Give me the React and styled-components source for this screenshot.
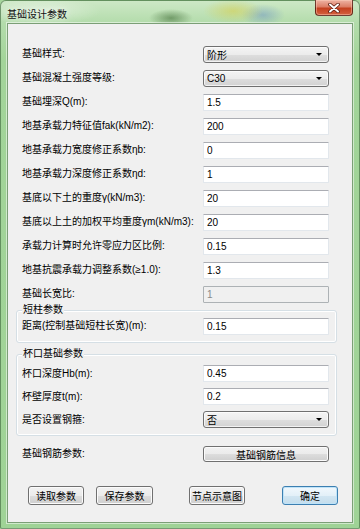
import React from 'react';
import styled, { createGlobalStyle } from 'styled-components';

const GlobalStyle = createGlobalStyle`
    html, body {
        margin: 0;
        padding: 0;
        overflow: hidden;
        background: #a6d69d;
    }
`;

const FONT = `"Liberation Sans", "Noto Sans CJK SC", sans-serif`;

const rows = [
    { label: '基础样式:', kind: 'select', value: '阶形' },
    { label: '基础混凝土强度等级:', kind: 'select', value: 'C30' },
    { label: '基础埋深Q(m):', value: '1.5' },
    { label: '地基承载力特征值fak(kN/m2):', value: '200' },
    { label: '地基承载力宽度修正系数ηb:', value: '0' },
    { label: '地基承载力深度修正系数ηd:', value: '1' },
    { label: '基底以下土的重度γ(kN/m3):', value: '20' },
    { label: '基底以上土的加权平均重度γm(kN/m3):', value: '20' },
    { label: '承载力计算时允许零应力区比例:', value: '0.15' },
    { label: '地基抗震承载力调整系数(≥1.0):', value: '1.3' },
    { label: '基础长宽比:', value: '1', disabled: true },
];

const cupRows = [
    { label: '杯口深度Hb(m):', value: '0.45' },
    { label: '杯壁厚度t(m):', value: '0.2' },
    { label: '是否设置钢箍:', kind: 'select', value: '否' },
];

const Control = ({ kind, value, disabled }) =>
    kind === 'select' ? (
        <Select>
            <span>{value}</span>
            <Arrow />
        </Select>
    ) : (
        <TextBox value={value} readOnly disabled={disabled} />
    );

const Field = ({ row, inset, h }) => (
    <Row $inset={inset} $h={h}>
        <Label>{row.label}</Label>
        <Control {...row} />
    </Row>
);

const App = () => (
    <>
        <GlobalStyle />
        <Window>
            <TitleBar>
                <Title>基础设计参数</Title>
                <CloseButton>
                    <svg width="12" height="10" viewBox="0 0 12 10">
                        <path d="M2 1.5 L10 8.5 M10 1.5 L2 8.5" stroke="#5a1c10" strokeWidth="3.6" strokeLinecap="round" />
                        <path d="M2 1.5 L10 8.5 M10 1.5 L2 8.5" stroke="#ffffff" strokeWidth="2" strokeLinecap="round" />
                    </svg>
                </CloseButton>
            </TitleBar>

            <Client>
                {rows.map(row => (
                    <Field key={row.label} row={row} />
                ))}

                <Group $top={4} $pt={3}>
                    <GroupTitle>短柱参数</GroupTitle>
                    <Field row={{ label: '距离(控制基础短柱长宽)(m):', value: '0.15' }} inset />
                </Group>

                <Group $top={11} $pt={7}>
                    <GroupTitle>杯口基础参数</GroupTitle>
                    {cupRows.map(row => (
                        <Field key={row.label} row={row} inset h={23} />
                    ))}
                </Group>

                <Row style={{ marginTop: 6 }}>
                    <Label>基础钢筋参数:</Label>
                    <WideButton>基础钢筋信息</WideButton>
                </Row>

                <ButtonBar>
                    <Button $ml={0}>读取参数</Button>
                    <Button $ml={12} $w={57}>保存参数</Button>
                    <Button $ml={36}>节点示意图</Button>
                    <Button $ml={37} $default>确定</Button>
                </ButtonBar>
            </Client>
        </Window>
    </>
);

const Window = styled.div`
    box-sizing: border-box;
    width: 360px;
    height: 529px;
    display: flex;
    flex-direction: column;
    padding: 0 6px 5px 6px;
    border: 1px solid rgba(50, 90, 50, 0.55);
    border-radius: 6px 6px 2px 2px;
    font-family: ${FONT};
    font-size: 10px;
    color: #000;
    background:
        radial-gradient(ellipse 22px 9px at 170px 17px, rgba(55, 100, 45, 0.55), transparent),
        radial-gradient(ellipse 30px 12px at 232px 10px, rgba(215, 205, 70, 0.55), transparent),
        radial-gradient(ellipse 22px 11px at 262px 14px, rgba(70, 110, 200, 0.35), transparent),
        radial-gradient(ellipse 60px 14px at 40px 10px, rgba(255, 255, 255, 0.45), transparent),
        linear-gradient(180deg, #cde8c6 0px, #b3dcab 22px, #a2d499 60px, #9fd396 100%);
`;

const TitleBar = styled.div`
    height: 22px;
    flex: 0 0 22px;
    display: flex;
    align-items: flex-start;
    justify-content: space-between;
`;

const Title = styled.div`
    padding: 5px 0 0 0;
    font-size: 10px;
    color: #111;
    text-shadow: 0 0 6px rgba(255, 255, 255, 0.9);
`;

const CloseButton = styled.div`
    box-sizing: border-box;
    width: 38px;
    height: 16px;
    margin-top: -1px;
    display: flex;
    align-items: center;
    justify-content: center;
    border: 1px solid rgba(70, 25, 15, 0.75);
    border-top: none;
    border-radius: 0 0 4px 4px;
    background: linear-gradient(180deg, #eeb3a3 0%, #dc7e66 45%, #c4401f 55%, #d4623f 100%);
    box-shadow: inset 0 0 0 1px rgba(255, 210, 190, 0.45);
`;

const Client = styled.div`
    flex: 1;
    display: flex;
    flex-direction: column;
    padding-top: 18px;
    background: #f0f0f0;
    border: 1px solid #7b9f76;
    box-shadow: 0 0 0 1px rgba(255, 255, 255, 0.5);
`;

const Row = styled.div`
    display: flex;
    align-items: center;
    height: ${p => p.$h || 24}px;
    padding-left: ${p => (p.$inset ? 5 : 14)}px;
`;

const Label = styled.div`
    flex: 0 0 181px;
    white-space: nowrap;
    line-height: 12px;
`;

const TextBox = styled.input`
    box-sizing: border-box;
    width: 126px;
    height: 17px;
    margin: 0;
    padding: 0 3px;
    font-family: ${FONT};
    font-size: 10px;
    color: #000;
    background: #fff;
    border: 1px solid #e2e7ec;
    border-top-color: #abadb3;
    border-radius: 1px;
    outline: none;

    &:disabled {
        color: #8a8a8a;
        background: #f0f0f0;
        border-color: #adb2b5;
    }
`;

const Select = styled.div`
    box-sizing: border-box;
    width: 126px;
    height: 17px;
    display: flex;
    align-items: center;
    justify-content: space-between;
    padding: 0 6px 0 3px;
    border: 1px solid #707070;
    border-radius: 3px;
    background: linear-gradient(180deg, #f4f4f4 0%, #ececec 50%, #dedede 51%, #d2d2d2 100%);
    box-shadow: inset 0 0 0 1px rgba(255, 255, 255, 0.7);
`;

const Arrow = styled.span`
    width: 0;
    height: 0;
    border-left: 3px solid transparent;
    border-right: 3px solid transparent;
    border-top: 3px solid #000;
`;

const Group = styled.div`
    position: relative;
    margin: ${p => p.$top}px 15px 0 8px;
    padding: ${p => p.$pt}px 0 4px 0;
    border: 1px solid #d5dfe5;
    border-radius: 3px;
    box-shadow: inset 0 0 0 1px #fff;
`;

const GroupTitle = styled.span`
    position: absolute;
    top: -7px;
    left: 5px;
    padding: 0 1px;
    line-height: 12px;
    background: #f0f0f0;
`;

const buttonFace = `
    box-sizing: border-box;
    display: flex;
    align-items: center;
    justify-content: center;
    font-family: ${FONT};
    font-size: 10px;
    color: #000;
    border: 1px solid #707070;
    border-radius: 3px;
    background: linear-gradient(180deg, #f2f2f2 0%, #ebebeb 50%, #dddddd 51%, #cfcfcf 100%);
    box-shadow: inset 0 0 0 1px #fbfbfb;
`;

const WideButton = styled.div`
    ${buttonFace}
    width: 126px;
    height: 16px;
`;

const ButtonBar = styled.div`
    display: flex;
    margin-top: 20px;
    padding-left: 20px;
`;

const Button = styled.div`
    ${buttonFace}
    width: ${p => p.$w || 56}px;
    height: 19px;
    margin-left: ${p => p.$ml}px;
    ${p => p.$default && `
        border-color: #3c7fb1;
        background: linear-gradient(180deg, #f1f8fd 0%, #e3f0f8 50%, #d2e6f2 51%, #c4ddec 100%);
        box-shadow: inset 0 0 0 1px #bfe3f8;
    `}
`;

export default App;
